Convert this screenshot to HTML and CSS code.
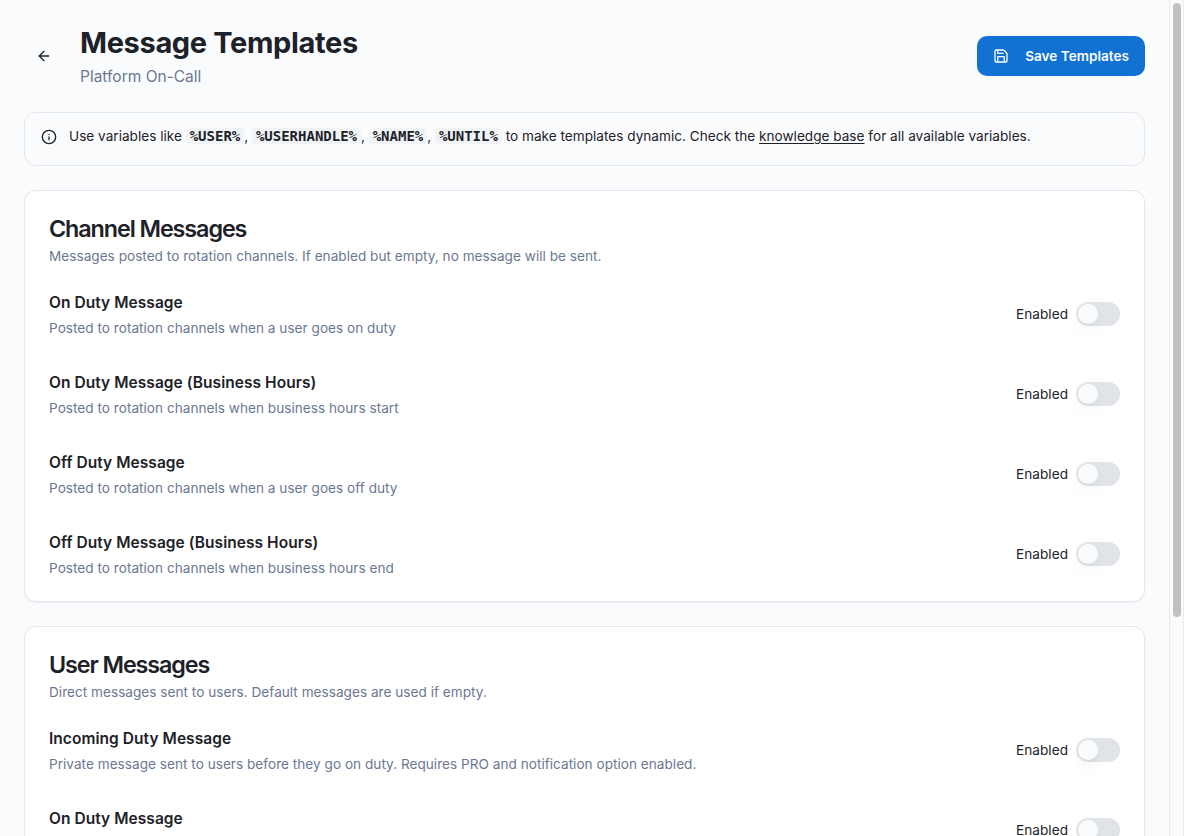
FILE: index.html
```html
<!DOCTYPE html>
<html lang="en">
<head>
<meta charset="utf-8">
<title>Message Templates</title>
<link rel="stylesheet" href="styles.css">
</head>
<body>
<div class="app">
  <main class="page">
    <header class="header">
      <button class="back" aria-label="Back">
        <svg width="16" height="16" viewBox="0 0 24 24" fill="none" stroke="currentColor" stroke-width="2" stroke-linecap="round" stroke-linejoin="round"><path d="m12 19-7-7 7-7"/><path d="M19 12H5"/></svg>
      </button>
      <div class="heading">
        <h1 class="title">Message Templates</h1>
        <p class="subtitle">Platform On-Call</p>
      </div>
      <button class="save">
        <svg width="16" height="16" viewBox="0 0 24 24" fill="none" stroke="currentColor" stroke-width="2" stroke-linecap="round" stroke-linejoin="round"><path d="M15.2 3a2 2 0 0 1 1.4.6l3.8 3.8a2 2 0 0 1 .6 1.4V19a2 2 0 0 1-2 2H5a2 2 0 0 1-2-2V5a2 2 0 0 1 2-2z"/><path d="M17 21v-7a1 1 0 0 0-1-1H8a1 1 0 0 0-1 1v7"/><path d="M7 3v4a1 1 0 0 0 1 1h7"/></svg>
        <span>Save Templates</span>
      </button>
    </header>

    <div class="alert">
      <svg width="16" height="16" viewBox="0 0 24 24" fill="none" stroke="currentColor" stroke-width="2" stroke-linecap="round" stroke-linejoin="round"><circle cx="12" cy="12" r="10"/><path d="M12 16v-4"/><path d="M12 8h.01"/></svg>
      <p class="alert-text">Use variables like <code class="code">%USER%</code>, <code class="code">%USERHANDLE%</code>, <code class="code">%NAME%</code>, <code class="code">%UNTIL%</code> to make templates dynamic. Check the <a class="link">knowledge base</a> for all available variables.</p>
    </div>

    <section class="card">
      <h2 class="card-title">Channel Messages</h2>
      <p class="card-desc">Messages posted to rotation channels. If enabled but empty, no message will be sent.</p>
      <div class="items">
        <div class="item">
          <div class="info"><h3 class="name">On Duty Message</h3><p class="desc">Posted to rotation channels when a user goes on duty</p></div>
          <label class="toggle">Enabled<span class="switch"><span class="thumb"></span></span></label>
        </div>
        <div class="item">
          <div class="info"><h3 class="name">On Duty Message (Business Hours)</h3><p class="desc">Posted to rotation channels when business hours start</p></div>
          <label class="toggle">Enabled<span class="switch"><span class="thumb"></span></span></label>
        </div>
        <div class="item">
          <div class="info"><h3 class="name">Off Duty Message</h3><p class="desc">Posted to rotation channels when a user goes off duty</p></div>
          <label class="toggle">Enabled<span class="switch"><span class="thumb"></span></span></label>
        </div>
        <div class="item">
          <div class="info"><h3 class="name">Off Duty Message (Business Hours)</h3><p class="desc">Posted to rotation channels when business hours end</p></div>
          <label class="toggle">Enabled<span class="switch"><span class="thumb"></span></span></label>
        </div>
      </div>
    </section>

    <section class="card">
      <h2 class="card-title">User Messages</h2>
      <p class="card-desc">Direct messages sent to users. Default messages are used if empty.</p>
      <div class="items">
        <div class="item">
          <div class="info"><h3 class="name">Incoming Duty Message</h3><p class="desc">Private message sent to users before they go on duty. Requires PRO and notification option enabled.</p></div>
          <label class="toggle">Enabled<span class="switch"><span class="thumb"></span></span></label>
        </div>
        <div class="item">
          <div class="info"><h3 class="name">On Duty Message</h3></div>
          <label class="toggle">Enabled<span class="switch"><span class="thumb"></span></span></label>
        </div>
      </div>
    </section>
  </main>
  <div class="scrollbar"><div class="scroll-thumb"></div></div>
</div>
</body>
</html>
```

FILE: styles.css
```css
* { box-sizing: border-box; margin: 0; padding: 0; }
body { font-family: Inter, sans-serif; color: #1d2128; background: #fafbfd; }
svg { flex: none; display: block; }
.app { display: flex; height: 836px; overflow: hidden; }
.page { flex: 1; min-width: 0; padding: 24px; display: flex; flex-direction: column; gap: 24px; }
.header { display: flex; align-items: center; gap: 16px; height: 64px; flex: none; }
.back { width: 40px; height: 40px; display: flex; align-items: center; justify-content: center; border: 0; background: none; color: inherit; }
.heading { flex: 1; }
.title { font-size: 29px; line-height: 38px; font-weight: 700; letter-spacing: -0.35px; }
.subtitle { font-size: 15.5px; line-height: 26px; color: #6b7892; margin-top: 2px; margin-bottom: -2px; }
.save { display: flex; align-items: center; gap: 16px; height: 40px; padding: 0 16px; border: 0; border-radius: 10px; background: #1172d4; color: #fafcff; font: 600 13.6px/20px Inter, sans-serif; }
.alert { flex: none; height: 54px; display: flex; gap: 12px; padding: 13px 16px; border: 1px solid #e3e6ea; border-radius: 12px; font-size: 13.6px; line-height: 20px; }
.alert svg { margin-top: 3px; }
.alert-text { white-space: nowrap; letter-spacing: 0.01px; }
.code { font: 700 14px/16px "DejaVu Sans Mono", monospace; letter-spacing: 0; background: #f1f4f7; padding: 0 3.95px; border-radius: 4px; }
.link { text-decoration: underline; text-underline-offset: 2px; }
.card { flex: none; padding: 26px 24px 23px; background: #fff; border: 1px solid #e3e6ea; border-radius: 12px; box-shadow: 0 1px 2px rgba(0, 0, 0, .05); }
.card-title { font-size: 23.3px; line-height: 24px; font-weight: 600; letter-spacing: -1.07px; }
.card-desc { font-size: 13.6px; line-height: 20px; margin-top: 5px; letter-spacing: 0.02px; color: #6b7892; }
.items { display: flex; flex-direction: column; gap: 32px; margin-top: 24px; }
.item { display: flex; justify-content: space-between; align-items: center; height: 48px; }
.info { align-self: flex-start; }
.name { font-size: 15.5px; line-height: 26px; font-weight: 600; letter-spacing: 0.05px; }
.desc { font-size: 13.6px; line-height: 20px; margin-top: 2px; letter-spacing: 0.02px; color: #6b7892; }
.toggle { display: flex; align-items: center; gap: 8px; font-size: 13.6px; line-height: 20px; letter-spacing: 0.03px; }
.switch { width: 44px; height: 24px; padding: 2px; border-radius: 12px; background: #e0e4e8; }
.thumb { display: block; width: 20px; height: 20px; border-radius: 50%; background: #fafbfd; box-shadow: 0 10px 15px -3px rgba(0, 0, 0, .06), 0 4px 6px -4px rgba(0, 0, 0, .06); }
.scrollbar { width: 15px; padding: 3px 3px 0; border-left: 1px solid #e8e8e8; border-right: 1px solid #ededed; background: #fbfbfb; }
.scroll-thumb { width: 8px; height: 614px; border-radius: 4px; background: #c1c1c1; }
```
